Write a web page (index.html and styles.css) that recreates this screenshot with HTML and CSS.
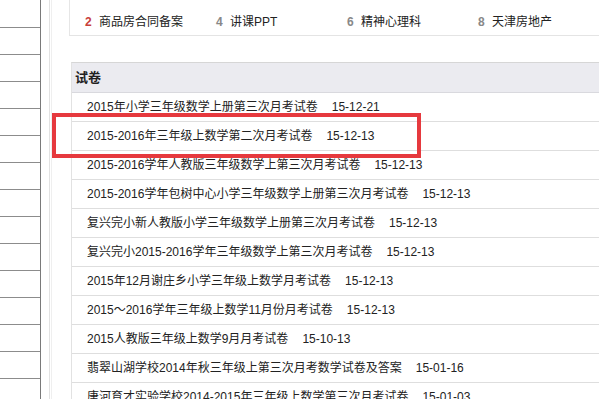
FILE: index.html
```html
<!DOCTYPE html>
<html lang="zh-CN">
<head>
<meta charset="utf-8">
<title>试卷</title>
<link rel="stylesheet" href="styles.css">
</head>
<body>
<div class="page">
  <aside class="sidebar">
    <div class="side-row"></div><div class="side-row"></div><div class="side-row"></div><div class="side-row"></div>
    <div class="side-row"></div><div class="side-row"></div><div class="side-row"></div><div class="side-row"></div>
    <div class="side-row"></div><div class="side-row"></div><div class="side-row"></div><div class="side-row"></div>
    <div class="side-row"></div><div class="side-row"></div><div class="side-row"></div>
  </aside>
  <main class="main">
    <div class="main-inner">
      <div class="hotbox">
        <ul class="hotlist">
          <li class="hot"><span class="num num-red">2</span>商品房合同备案</li>
          <li class="hot"><span class="num">4</span>讲课PPT</li>
          <li class="hot"><span class="num">6</span>精神心理科</li>
          <li class="hot"><span class="num">8</span>天津房地产</li>
        </ul>
      </div>
      <section class="papers">
        <h2 class="papers-title">试卷</h2>
        <ul class="paper-list">
          <li class="paper">2015年小学三年级数学上册第三次月考试卷<span class="date">15-12-21</span></li>
          <li class="paper">2015-2016年三年级上数学第二次月考试卷<span class="date">15-12-13</span></li>
          <li class="paper">2015-2016学年人教版三年级数学上第三次月考试卷<span class="date">15-12-13</span></li>
          <li class="paper">2015-2016学年包树中心小学三年级数学上册第三次月考试卷<span class="date">15-12-13</span></li>
          <li class="paper">复兴完小新人教版小学三年级数学上册第三次月考试卷<span class="date">15-12-13</span></li>
          <li class="paper">复兴完小2015-2016学年三年级数学上第三次月考试卷<span class="date">15-12-13</span></li>
          <li class="paper">2015年12月谢庄乡小学三年级上数学月考试卷<span class="date">15-12-13</span></li>
          <li class="paper">2015～2016学年三年级上数学11月份月考试卷<span class="date">15-12-13</span></li>
          <li class="paper">2015人教版三年级上数学9月月考试卷<span class="date">15-10-13</span></li>
          <li class="paper">翡翠山湖学校2014年秋三年级上第三次月考数学试卷及答案<span class="date">15-01-16</span></li>
          <li class="paper">唐河育才实验学校2014-2015年三年级上数学第三次月考试卷<span class="date">15-01-03</span></li>
        </ul>
      </section>
    </div>
  </main>
</div>
<div class="highlight"></div>
</body>
</html>
```

FILE: styles.css
```css
html, body {
  margin: 0;
  padding: 0;
  background: #fff;
}
body {
  width: 599px;
  height: 399px;
  overflow: hidden;
  position: relative;
  font-family: "Liberation Sans", "Noto Sans CJK SC", sans-serif;
  font-size: 12px;
  color: #333;
}
ul {
  list-style: none;
  margin: 0;
  padding: 0;
}
.page {
  display: flex;
  height: 399px;
}
.sidebar {
  width: 40px;
  flex: none;
  border-right: 1px solid #7a7a7a;
  padding-top: 1px;
  box-sizing: content-box;
}
.side-row {
  height: 26px;
  border-bottom: 1px solid #8c8c8c;
}
.main {
  margin-left: 8px;
  flex: 1;
  border-left: 1px solid #e2e2e2;
  min-width: 0;
}
.main-inner {
  margin-left: 1px;
  border-left: 1px solid #efefef;
  padding-left: 17px;
  height: 100%;
}
.hotbox {
  border-left: 1px solid #e6e6e6;
  border-bottom: 1px solid #e4e4e4;
  height: 35px;
  box-sizing: border-box;
  height: 36px;
  padding: 12px 0 0 15px;
}
.hotlist {
  display: grid;
  grid-template-columns: repeat(4, 131px);
  line-height: 20px;
  white-space: nowrap;
}
.hot {
  color: #222;
}
.num {
  display: inline-block;
  width: 14px;
  font-weight: bold;
  color: #888;
}
.num-red {
  color: #c8403a;
}
.papers {
  margin: 26px 0 0 2px;
  border-top: 1px solid #d6d6d6;
  border-left: 1px solid #e2e2e2;
}
.papers-title {
  margin: 0;
  height: 29px;
  line-height: 30px;
  padding-left: 3px;
  font-size: 13px;
  font-weight: bold;
  color: #222;
  background: #ebebf0;
  border-bottom: 1px solid #d9d9de;
}
.paper {
  height: 28px;
  line-height: 28px;
  padding-left: 15px;
  border-bottom: 1px solid #dedede;
  white-space: nowrap;
  color: #222;
}
.date {
  margin-left: 14px;
}
.highlight {
  position: absolute;
  left: 52px;
  top: 113px;
  width: 369px;
  height: 45px;
  box-sizing: border-box;
  border: 4px solid #e6393e;
}
```
